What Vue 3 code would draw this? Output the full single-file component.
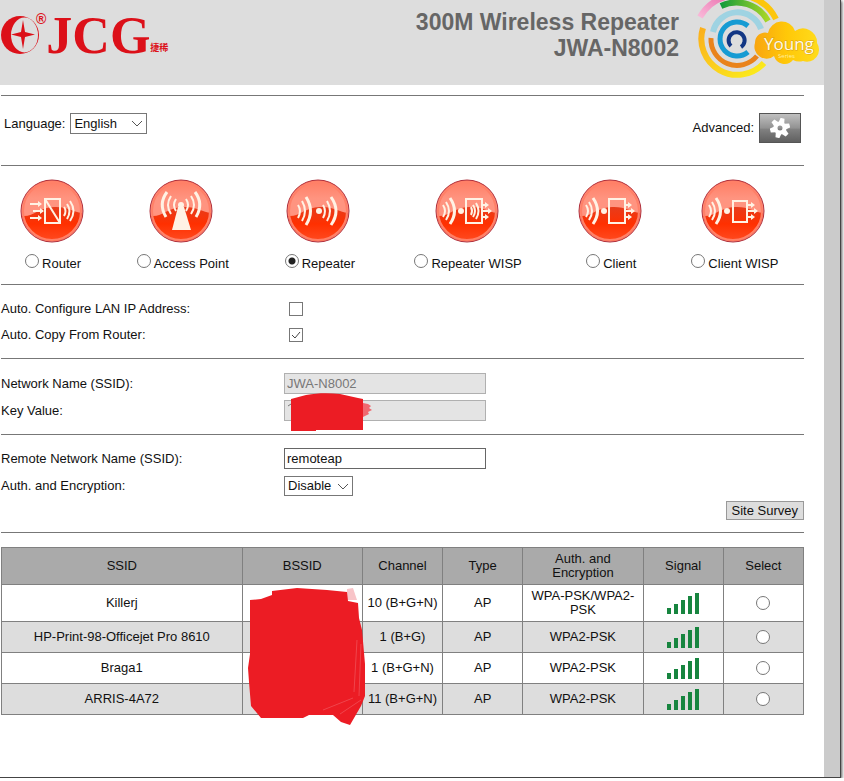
<template>
  <div class="window">
    <div class="page">
      <header class="banner">
        <div class="brand">
          <svg class="brand-mark" width="38" height="38" viewBox="0 0 38 38" aria-hidden="true">
            <circle cx="19" cy="19" r="19" fill="#dc1019" />
            <ellipse cx="23.5" cy="19" rx="13.5" ry="17.5" fill="#dddddd" />
            <path d="M22 4 L24 16 L34 18.5 L24 21 L22 33 L20 21 L10 18.5 L20 16 Z" fill="#dc1019" />
          </svg>
          <span class="brand-reg">®</span>
          <span class="brand-name">JCG</span>
          <span class="brand-sub">捷稀</span>
        </div>
        <h1 class="title">300M Wireless Repeater<br />JWA-N8002</h1>
        <svg class="young" width="126" height="80" viewBox="0 0 126 80" aria-hidden="true">
          <defs>
            <linearGradient id="pink" x1="0" y1="1" x2="1" y2="0">
              <stop offset="0" stop-color="#f9b8d8" />
              <stop offset="1" stop-color="#ea6fae" />
            </linearGradient>
            <linearGradient id="green" x1="0" y1="0" x2="1" y2="0">
              <stop offset="0" stop-color="#139b3c" />
              <stop offset="1" stop-color="#a8d626" />
            </linearGradient>
            <linearGradient id="amber" x1="0" y1="0" x2="1" y2="1">
              <stop offset="0" stop-color="#fbaf1c" />
              <stop offset="1" stop-color="#fbee1c" />
            </linearGradient>
            <linearGradient id="cloud" x1="0" y1="0" x2="1" y2="0">
              <stop offset="0" stop-color="#f9a510" />
              <stop offset="0.5" stop-color="#ffc808" />
              <stop offset="1" stop-color="#ffdc1c" />
            </linearGradient>
          </defs>
          <g fill="none">
            <path d="M3 17 A44 44 0 0 1 32 -4" stroke="url(#pink)" stroke-width="6" />
            <path d="M50 -4 A44 44 0 0 1 79 19" stroke="#fcc60c" stroke-width="6" />
            <path d="M24 6 A36 36 0 0 1 71 21" stroke="url(#green)" stroke-width="6" />
            <path d="M6 28 A36 36 0 0 0 67 63" stroke="url(#amber)" stroke-width="6" />
            <path d="M16 32 A25 25 0 0 1 64 29" stroke="#9fd3e2" stroke-width="6" />
            <path d="M14 38 A26 26 0 0 0 60 56" stroke="#e9831b" stroke-width="5" />
            <path d="M51 26 A17 17 0 1 0 51 52" stroke="#169bd3" stroke-width="5" />
            <path d="M34 46 A8 8 0 1 1 44 47" stroke="#123684" stroke-width="4" />
          </g>
          <path d="M58 43 A10 10 0 0 1 71 33 A14 14 0 0 1 98 31 A14 14 0 0 1 120 43 A12 12 0 0 1 106 61 A13 13 0 0 1 96 60 A11 11 0 0 1 77 56 A12 12 0 0 1 58 43 Z" fill="url(#cloud)" />
          <text class="young-name" x="67" y="50">Young</text>
          <text class="young-sub" x="81" y="58">Series</text>
        </svg>
      </header>

      <main class="content">
        <section class="toolbar">
          <div class="language">
            <label for="language">Language:</label>
            <span class="select-box language-box">
              <select id="language" v-model="language">
                <option>English</option>
              </select>
              <svg class="chevron" width="12" height="8" viewBox="0 0 12 8"><path d="M1 1 L6 6 L11 1" /></svg>
            </span>
          </div>
          <div class="advanced">
            <label for="advanced">Advanced:</label>
            <button id="advanced" type="button" class="gear-button">
              <svg width="20" height="20" viewBox="-10 -10 20 20" aria-hidden="true">
                <g fill="#ffffff">
                  <path v-for="a in [15, 75, 135, 195, 255, 315]" :key="a" d="M-3 -5 L-2 -10 H2 L3 -5 Z" :transform="`rotate(${a})`" />
                </g>
                <circle r="4.5" fill="none" stroke="#ffffff" stroke-width="4" />
              </svg>
            </button>
          </div>
        </section>

        <section class="modes">
          <div v-for="m in modes" :key="m.id" class="mode">
            <svg width="64" height="64" viewBox="0 0 64 64" aria-hidden="true">
              <defs>
                <linearGradient :id="'top-' + m.id" x1="0" y1="0" x2="0" y2="1">
                  <stop offset="0" stop-color="#ff7c62" />
                  <stop offset="0.3" stop-color="#ff9480" />
                </linearGradient>
                <linearGradient :id="'low-' + m.id" x1="0" y1="0" x2="0" y2="1">
                  <stop offset="0" stop-color="#e63c1c" />
                  <stop offset="0.5" stop-color="#ff3000" />
                  <stop offset="1" stop-color="#ff4a20" />
                </linearGradient>
              </defs>
              <circle cx="32" cy="32" r="31" :fill="'url(#top-' + m.id + ')'" />
              <path d="M2.400 37 C14 38 20 27 36 28 C48 28 54 33 61.900 34 A30 30 0 0 1 2.400 37 Z" :fill="'url(#low-' + m.id + ')'" />
              <circle cx="32" cy="32" r="29" fill="none" stroke="#ff8068" stroke-width="2" />
              <circle cx="32" cy="32" r="31" fill="none" stroke="#b0303c" stroke-width="1" />
              <g class="glyph">
                <template v-if="m.id === 'router'">
                  <path d="M10 25 H20 M13 32 H23 M10 39 H20" />
                  <path class="solid" d="M18 22 L22 25 L18 28 Z M20 29 L24 32 L20 35 Z M18 36 L22 39 L18 42 Z" />
                  <path d="M25 20 H40 V44 H25 Z M25 20 L40 44" />
                  <path d="M44 28 Q47 32 44 37 M47 25 Q52 32 47 40 M50 22 Q57 32 50 42" />
                </template>
                <template v-else-if="m.id === 'ap'">
                  <path class="solid" d="M29 28 L35 28 L42 51 H23 Z" />
                  <circle class="solid" cx="32" cy="26" r="3" />
                  <path d="M27 20 Q23 26 27 32 M37 20 Q41 26 37 32" />
                  <path d="M22 17 Q16 26 22 35 M42 17 Q48 26 42 35" />
                  <path class="thick" d="M18 13 Q9 25 17 38 M46 13 Q55 25 47 38" />
                </template>
                <template v-else-if="m.id === 'repeater'">
                  <path d="M12 26 Q16 32 12 39 M37 26 Q41 32 37 39" />
                  <path d="M16 22 Q22 32 16 42 M41 22 Q47 32 41 42" />
                  <path class="thick" d="M20 18 Q29 32 20 46 M45 18 Q55 32 45 46" />
                  <circle class="solid" cx="33" cy="32" r="3" />
                </template>
                <template v-else>
                  <path d="M8 26 Q12 32 8 38" />
                  <path d="M11 23 Q17 32 11 41" />
                  <path class="thick" d="M15 19 Q24 32 15 45" />
                  <circle class="solid" cx="26" cy="32" r="3" />
                  <path :d="m.id === 'clientwisp' ? 'M32 22 H46 V43 H32 Z' : 'M31 20 H47 V44 H31 Z'" />
                  <path v-if="m.id === 'wisp'" d="M36 28 Q38 32 36 36 M38 26 Q42 32 38 38 M41 24 Q46 32 41 40" />
                  <path d="M46 26 H51 M46 32 H54 M46 38 H51" />
                  <path class="solid" d="M50 23 L54 26 L50 29 Z M53 29 L57 32 L53 35 Z M50 35 L54 38 L50 41 Z" />
                </template>
              </g>
            </svg>
            <label class="mode-label">
              <input v-model="mode" type="radio" name="mode" :value="m.id" />
              <span>{{ m.name }}</span>
            </label>
          </div>
        </section>

        <section class="fields options">
          <div class="field">
            <label for="auto-lan">Auto. Configure LAN IP Address:</label>
            <input id="auto-lan" v-model="autoLan" type="checkbox" />
          </div>
          <div class="field">
            <label for="auto-copy">Auto. Copy From Router:</label>
            <input id="auto-copy" v-model="autoCopy" type="checkbox" />
          </div>
        </section>

        <section class="fields network">
          <div class="field">
            <label for="ssid">Network Name (SSID):</label>
            <input id="ssid" class="text" type="text" value="JWA-N8002" disabled />
          </div>
          <div class="field">
            <label for="key">Key Value:</label>
            <div class="covered">
              <input id="key" class="text" type="text" value="" disabled />
              <svg class="key-cover" width="90" height="38" viewBox="0 0 90 38" aria-hidden="true">
                <path d="M4 13 L7 11" stroke="#777777" />
                <path d="M79 10 L84 11 L87 13 L85 15 L88 17 L84 19 L85 21 L79 24 Z" fill="#f0686f" />
                <path d="M7 6 L22 2 C34 0 44 0 56 1 L74 5 L79 6 V37 H32 V38 H7 Z" fill="#ec1c24" />
              </svg>
            </div>
          </div>
        </section>

        <section class="fields remote">
          <div class="field">
            <label for="remote">Remote Network Name (SSID):</label>
            <input id="remote" v-model="remote" class="text" type="text" />
          </div>
          <div class="field">
            <label for="auth">Auth. and Encryption:</label>
            <span class="select-box auth-box">
              <select id="auth" v-model="auth">
                <option>Disable</option>
              </select>
              <svg class="chevron" width="12" height="8" viewBox="0 0 12 8"><path d="M1 1 L6 6 L11 1" /></svg>
            </span>
          </div>
          <button type="button" class="survey">Site Survey</button>
        </section>

        <div class="results">
          <table>
            <thead>
              <tr>
                <th class="w30">SSID</th>
                <th class="w15">BSSID</th>
                <th class="w10">Channel</th>
                <th class="w10">Type</th>
                <th class="w15">Auth. and Encryption</th>
                <th class="w10">Signal</th>
                <th class="w10">Select</th>
              </tr>
            </thead>
            <tbody>
              <tr v-for="ap in aps" :key="ap.ssid">
                <td>{{ ap.ssid }}</td>
                <td></td>
                <td class="channel">{{ ap.channel }}</td>
                <td>AP</td>
                <td>{{ ap.auth }}</td>
                <td>
                  <svg class="signal" width="32" height="22" viewBox="0 0 32 22" aria-hidden="true">
                    <path d="M0 16 H4 V22 H0 Z M7 12 H11 V22 H7 Z M14 8 H18 V22 H14 Z M21 4 H25 V22 H21 Z M28 1 H32 V22 H28 Z" fill="#17853f" />
                  </svg>
                </td>
                <td><input v-model="selected" type="radio" name="ap" :value="ap.ssid" :aria-label="ap.ssid" /></td>
              </tr>
            </tbody>
          </table>
          <svg class="bssid-cover" width="120" height="140" viewBox="0 0 120 140" aria-hidden="true">
            <path d="M100 5 L106 4 L110 16 H100 Z" fill="#f8c4c8" />
            <path d="M3 16 L14 15 L25 11 V7 L50 4 L80 6 L100 8 L101 17 L111 19 L112 34 L115 46 L118 80 L118 112 L114 122 L103 141 L94 138 L86 131 L62 131 L56 134 L14 134 L4 122 L2 98 L1 84 L3 70 Z" fill="#ec1c24" />
            <path d="M110 56 L107 108 M114 60 L112 112 M76 126 L106 114 M93 130 L114 116" fill="none" stroke="#f0444c" stroke-width="1" />
          </svg>
        </div>
      </main>
    </div>
    <div class="scroll-track"></div>
  </div>
</template>

<script setup>
import { ref } from 'vue'

const language = ref('English')
const mode = ref('repeater')
const autoLan = ref(false)
const autoCopy = ref(true)
const remote = ref('remoteap')
const auth = ref('Disable')
const selected = ref('')

const modes = [
  { id: 'router', name: 'Router' },
  { id: 'ap', name: 'Access Point' },
  { id: 'repeater', name: 'Repeater' },
  { id: 'wisp', name: 'Repeater WISP' },
  { id: 'client', name: 'Client' },
  { id: 'clientwisp', name: 'Client WISP' },
]

const aps = [
  { ssid: 'Killerj', channel: '10 (B+G+N)', auth: 'WPA-PSK/WPA2-PSK' },
  { ssid: 'HP-Print-98-Officejet Pro 8610', channel: '1 (B+G)', auth: 'WPA2-PSK' },
  { ssid: 'Braga1', channel: '1 (B+G+N)', auth: 'WPA2-PSK' },
  { ssid: 'ARRIS-4A72', channel: '11 (B+G+N)', auth: 'WPA2-PSK' },
]
</script>

<style>
body {
  margin: 0;
  background: #ffffff;
}
</style>

<style scoped>
.window {
  display: flex;
  box-sizing: border-box;
  min-height: calc(100vh - 3px);
  margin-right: 3px;
  border-right: 1px solid #444444;
  border-bottom: 1px solid #444444;
  box-shadow: 1px 1px 3px #555555;
  font-family: "Liberation Sans", Arial, sans-serif;
  font-size: 13px;
  line-height: 14px;
  color: #111111;
  background: #ffffff;
}
.page {
  flex: 1;
  min-width: 0;
}
.scroll-track {
  width: 16px;
  background: #cbcbcb;
}
.banner {
  display: flex;
  height: 85px;
  background: #dddddd;
}
.brand {
  display: flex;
  align-items: flex-start;
  padding: 16px 0 0 1px;
  color: #dc1019;
}
.brand-reg {
  margin-top: -4px;
  margin-left: -3px;
  font-size: 14px;
  font-weight: bold;
}
.brand-name {
  font-family: "Liberation Serif", "Times New Roman", serif;
  font-size: 52px;
  font-weight: bold;
  line-height: 40px;
}
.brand-sub {
  margin-top: 25px;
  font-family: "Liberation Sans", "Noto Sans CJK SC", sans-serif;
  font-size: 9px;
  font-weight: bold;
}
.title {
  margin: 9px 18px 0 auto;
  font-size: 23px;
  line-height: 26px;
  text-align: right;
  color: #666666;
}
.young {
  margin-right: 1px;
}
.young-name {
  font-family: "Open Sans", sans-serif;
  font-size: 17px;
  fill: #fffbe6;
  stroke: #d9a01c;
  stroke-width: 1px;
  paint-order: stroke;
}
.young-sub {
  font-family: "Open Sans", sans-serif;
  font-size: 6px;
  fill: #fff0a0;
}
.content {
  margin: 10px 20px 0 1px;
}
section {
  border-top: 1px solid #777777;
}
.toolbar {
  display: flex;
  justify-content: space-between;
  align-items: flex-start;
  padding: 17px 3px 22px;
}
.language,
.advanced {
  display: flex;
  align-items: center;
  gap: 5px;
}
.select-box {
  position: relative;
  display: flex;
}
.language-box {
  width: 77px;
  height: 21px;
}
.auth-box {
  width: 69px;
  height: 20px;
}
select {
  appearance: none;
  width: 100%;
  margin: 0;
  padding: 0 3px;
  border: 1px solid #777777;
  border-radius: 0;
  font: inherit;
  color: inherit;
  background: #ffffff;
}
.chevron {
  position: absolute;
  top: 7px;
  right: 4px;
  fill: none;
  stroke: #555555;
  pointer-events: none;
}
.gear-button {
  display: flex;
  align-items: center;
  justify-content: center;
  width: 42px;
  height: 30px;
  padding: 0;
  border: 1px solid #555555;
  background: linear-gradient(#c0c0c0, #929292 50%, #808080 55%, #606060);
}
.modes {
  display: grid;
  grid-template-columns: 101fr 158fr 116fr 180fr 106fr 141fr;
  padding: 13px 0 10px;
}
.mode {
  display: flex;
  flex-direction: column;
  align-items: center;
  gap: 10px;
}
.mode-label {
  display: flex;
  gap: 3px;
  padding-left: 3px;
  line-height: 21px;
  white-space: nowrap;
}
.glyph {
  fill: none;
  stroke: #fff2e4;
  stroke-width: 2;
}
.glyph .solid {
  fill: #fff2e4;
  stroke: none;
}
.glyph .thick {
  stroke-width: 3;
}
input[type="radio"],
input[type="checkbox"] {
  appearance: none;
  box-sizing: border-box;
  width: 14px;
  height: 14px;
  margin: 0;
  border: 1px solid #777777;
  background: #ffffff;
}
input[type="radio"] {
  border-radius: 50%;
}
.mode-label input[type="radio"] {
  margin-top: 1px;
}
input[type="radio"]:checked {
  background: radial-gradient(circle, #222222 3px, #ffffff 4px);
}
.field input[type="checkbox"] {
  margin-left: 5px;
}
input[type="checkbox"]:checked {
  background: url("data:image/svg+xml,%3Csvg xmlns='http://www.w3.org/2000/svg' viewBox='0 0 12 12'%3E%3Cpath d='M2 6 L5 9 L10 3' fill='none' stroke='%23444'/%3E%3C/svg%3E");
}
.field {
  display: grid;
  grid-template-columns: 283px 1fr;
  align-items: center;
  height: 27px;
}
.options {
  padding: 11px 0 10px;
}
.options .field {
  height: 26px;
}
.network {
  padding: 11px 0 10px;
}
.remote {
  display: flex;
  flex-direction: column;
  padding: 10px 0 12px;
  border-bottom: 1px solid #777777;
}
.text {
  box-sizing: border-box;
  width: 202px;
  height: 21px;
  padding: 0 2px;
  border: 1px solid #666666;
  font: inherit;
  color: inherit;
  background: #ffffff;
}
.text:disabled {
  border-color: #b0b0b0;
  color: #777777;
  background: #e4e4e4;
}
.covered {
  position: relative;
  display: flex;
}
.key-cover {
  position: absolute;
  top: -7px;
  left: 0;
}
.survey {
  align-self: flex-end;
  height: 19px;
  margin-top: 2px;
  padding: 0 5px;
  border: 1px solid #999999;
  font: inherit;
  color: inherit;
  background: #dddddd;
}
.results {
  position: relative;
  margin-top: 14px;
}
.bssid-cover {
  position: absolute;
  top: 37px;
  left: 246px;
  overflow: visible;
}
table {
  width: 100%;
  border-collapse: collapse;
  table-layout: fixed;
}
th,
td {
  box-sizing: border-box;
  height: 31px;
  padding: 0 4px;
  border: 1px solid #808080;
  font-weight: normal;
  text-align: center;
}
th,
tbody tr:first-child td {
  height: 37px;
}
th {
  background: #aaaaaa;
}
tbody tr:nth-child(even) {
  background: #dddddd;
}
td.channel {
  padding: 0;
  white-space: nowrap;
}
.signal {
  display: block;
  margin: 0 auto;
}
td input[type="radio"] {
  display: block;
  margin: 0 auto;
}
.w30 {
  width: 30%;
}
.w15 {
  width: 15%;
}
.w10 {
  width: 10%;
}
</style>
